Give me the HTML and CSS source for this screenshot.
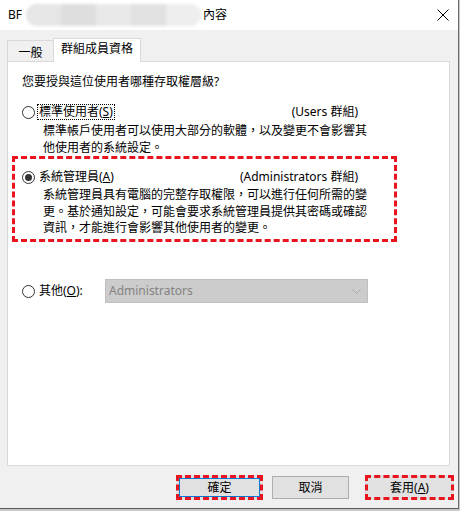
FILE: index.html
```html
<!DOCTYPE html>
<html lang="zh-Hant">
<head>
<meta charset="utf-8">
<title>內容</title>
<link rel="stylesheet" href="styles.css">
</head>
<body>
<div class="window">
  <div class="titlebar">
    <span class="t-bf">BF</span>
    <span class="blur"><span class="b1"></span><span class="b2"></span><span class="b3"></span><span class="b4"></span><span class="b5"></span></span>
    <span class="t-name">內容</span>
    <svg class="close" width="12" height="12" viewBox="0 0 12 12"><path d="M0.5 0.5 L11.5 11.5 M11.5 0.5 L0.5 11.5" stroke="#000" stroke-width="1" fill="none"/></svg>
  </div>
  <div class="body">
    <div class="tabs">
      <div class="tab">一般</div>
      <div class="tab active">群組成員資格</div>
    </div>
    <div class="panel">
      <p class="question">您要授與這位使用者哪種存取權層級?</p>
      <div class="option first">
        <div class="opt-row">
          <span class="radio"></span>
          <span class="label focus">標準使用者(<u>S</u>)</span>
          <span class="group">(Users 群組)</span>
        </div>
        <p class="desc">標準帳戶使用者可以使用大部分的軟體，以及變更不會影響其<br>他使用者的系統設定。</p>
      </div>
      <div class="option highlight">
        <div class="opt-row">
          <span class="radio checked"></span>
          <span class="label">系統管理員(<u>A</u>)</span>
          <span class="group">(Administrators 群組)</span>
        </div>
        <p class="desc">系統管理員具有電腦的完整存取權限，可以進行任何所需的變<br>更。基於通知設定，可能會要求系統管理員提供其密碼或確認<br>資訊，才能進行會影響其他使用者的變更。</p>
      </div>
      <div class="opt-row other">
        <span class="radio"></span>
        <span class="label other-label">其他(<u>O</u>):</span>
        <div class="combo">
          <span class="combo-text">Administrators</span>
          <svg class="chev" width="9" height="5" viewBox="0 0 9 5"><path d="M0.5 0.5 L4.5 4.5 L8.5 0.5" stroke="#a8a8a8" stroke-width="1" fill="none"/></svg>
        </div>
      </div>
    </div>
    <div class="buttons">
      <div class="btn ok">確定</div>
      <div class="btn cancel">取消</div>
      <div class="btn apply">套用(<u>A</u>)</div>
    </div>
  </div>
</div>
</body>
</html>
```
FILE: styles.css
```css
* { box-sizing: border-box; }
html, body { margin: 0; padding: 0; }
body {
  width: 460px;
  height: 511px;
  background: #c9c9c9;
  font-family: "Noto Sans", "Noto Sans CJK TC", sans-serif;
  font-size: 12px;
  color: #000;
  overflow: hidden;
}
.window {
  width: 459px;
  height: 509px;
  border-right: 1px solid #6a6a6a;
  border-bottom: 1px solid #5a5a5a;
  background: #f0f0f0;
  display: flex;
  flex-direction: column;
}
.titlebar {
  height: 30px;
  background: #fff;
  display: flex;
  align-items: center;
  padding-left: 8px;
  position: relative;
}
.t-bf { font-size: 12px; line-height: 16px; }
.blur {
  width: 175px;
  height: 22px;
  margin-left: 4px;
  border-radius: 11px;
  background: #ececec;
  display: flex;
  overflow: hidden;
  filter: blur(1.5px);
}
.blur span { flex: 1; }
.b1 { background: #e6e6e6; }
.b2 { background: #dedede; }
.b3 { background: #e9e9e9; }
.b4 { background: #e1e1e1; }
.b5 { background: #eeeeee; }
.t-name { margin-left: 2px; line-height: 16px; }
.close { margin-left: auto; margin-right: 9px; }

.body {
  flex: 1;
  display: flex;
  flex-direction: column;
  padding: 8px 0 0 7px;
}
.tabs {
  display: flex;
  align-items: flex-end;
  height: 23px;
  position: relative;
  z-index: 1;
}
.tab {
  height: 21px;
  width: 47px;
  border: 1px solid #d9d9d9;
  border-bottom: none;
  background: #f0f0f0;
  line-height: 19px;
  text-align: center;
  padding-top: 2px;
}
.tab.active {
  height: 24px;
  width: 88px;
  margin-bottom: -1px;
  background: #fff;
  border-left: 1px solid #d9d9d9;
  border-top: 1px solid #d9d9d9;
  border-right: 1px solid #d9d9d9;
  margin-left: -1px;
  padding-top: 0;
  line-height: 20px;
}
.panel {
  width: 443px;
  height: 405px;
  background: #fff;
  border: 1px solid #d9d9d9;
  padding: 12px 0 0 14px;
  display: flex;
  flex-direction: column;
}
.question { margin: 0; line-height: 16px; }
.option { display: flex; flex-direction: column; }
.option.first { margin-top: 14px; }
.opt-row {
  display: flex;
  align-items: center;
  width: 336px;
  height: 16px;
}
.radio {
  width: 13px;
  height: 13px;
  border: 1px solid #333;
  border-radius: 50%;
  background: #fff;
  display: flex;
  align-items: center;
  justify-content: center;
  flex: none;
}
.radio.checked::after {
  content: "";
  width: 7px;
  height: 7px;
  border-radius: 50%;
  background: #333;
}
.label {
  margin-left: 2px;
  border: 1px solid transparent;
  padding: 0 1px;
  line-height: 14px;
  white-space: nowrap;
}
.label.focus { border: 1px dotted #000; }
.group { margin-left: auto; white-space: nowrap; line-height: 16px; }
.desc {
  margin: 2px 0 0 21px;
  line-height: 17px;
  white-space: nowrap;
}
.highlight {
  margin: 0 0 0 -10px;
  width: 385px;
  height: 86px;
  border: 3px dashed #e8141e;
  padding: 10px 0 0 7px;
}
.highlight .desc { line-height: 16.7px; }
.other { margin-top: 37px; height: 24px; width: auto; }
.other-label { width: 68px; }
.combo {
  width: 263px;
  height: 24px;
  background: #cccccc;
  border: 1px solid #bfbfbf;
  display: flex;
  align-items: center;
  padding-left: 3px;
}
.combo-text { color: #838383; line-height: 16px; }
.chev { margin-left: auto; margin-right: 6px; }

.buttons {
  display: flex;
  align-items: flex-start;
  margin-top: 9px;
  padding-left: 169px;
}
.btn {
  height: 25px;
  display: flex;
  align-items: center;
  justify-content: center;
  background: #e1e1e1;
  line-height: 16px;
}
.ok {
  width: 87px;
  border: 3px dashed #e8141e;
  box-shadow: inset 0 0 0 1px #0a78d7;
}
.cancel {
  width: 77px;
  margin-left: 9px;
  margin-top: 1px;
  height: 23px;
  border: 1px solid #adadad;
}
.apply {
  width: 89px;
  margin-left: 16px;
  border: 3px dashed #e8141e;
}
```
